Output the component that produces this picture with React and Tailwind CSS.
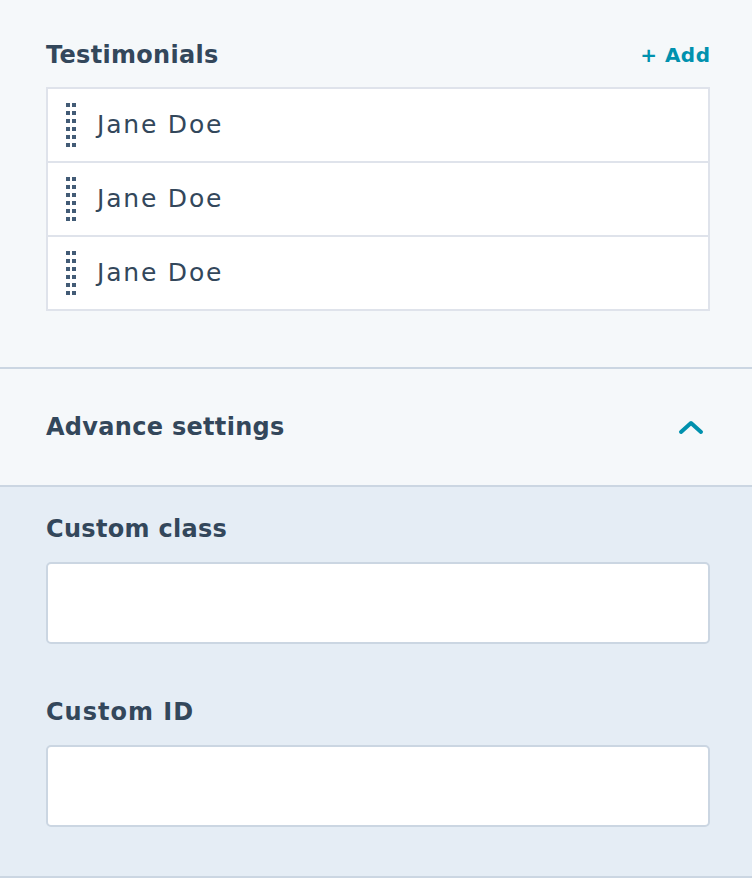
import React from "react";

const font = { fontFamily: '"DejaVu Sans", "Noto Sans", sans-serif' };

function Handle() {
  const dots = [];
  for (let r = 0; r < 6; r++) {
    for (let c = 0; c < 2; c++) {
      dots.push(<rect key={`${r}-${c}`} x={c * 6} y={r * 8} width="4" height="4" fill="#425b76" />);
    }
  }
  return (
    <svg width="10" height="44" viewBox="0 0 10 44" className="shrink-0">
      {dots}
    </svg>
  );
}

function Row({ last }) {
  return (
    <div className={`flex items-center pl-[18px] bg-white ${last ? "h-[72px]" : "h-[74px] border-b-2 border-[#dfe3eb]"}`}>
      <Handle />
      <span className="ml-[21px] text-[25px] tracking-[1.8px] text-[#33475b]">Jane Doe</span>
    </div>
  );
}

export default function App() {
  return (
    <div className="w-[752px] h-[878px] bg-[#e5edf5] text-[#33475b]" style={font}>
      <div className="bg-[#f5f8fa] pl-[46px] pr-[42px] pt-[38px] pb-[56px] border-b-2 border-[#cbd6e2]">
        <div className="flex h-[34px] items-center justify-between">
          <span className="text-[24px] font-bold tracking-[0.3px]">Testimonials</span>
          <span className="text-[20px] font-bold tracking-[0.5px] text-[#0091ae] -mr-[0.5px]">+ Add</span>
        </div>
        <div className="mt-[15px] border-2 border-[#dfe3eb]">
          <Row />
          <Row />
          <Row last />
        </div>
      </div>
      <div className="bg-[#f5f8fa] h-[118px] pl-[46px] pr-[48px] flex items-center justify-between border-b-2 border-[#cbd6e2]">
        <span className="text-[24px] font-bold tracking-[0.3px]">Advance settings</span>
        <svg width="26" height="16" viewBox="0 0 26 16">
          <path d="M3 13 L13 4 L23 13" fill="none" stroke="#0091ae" strokeWidth="4" strokeLinecap="round" strokeLinejoin="round" />
        </svg>
      </div>
      <div className="pl-[46px] pr-[42px] pt-[27px] h-[391px] border-b-2 border-[#cbd6e2]">
        <div className="h-[30px] flex items-center text-[24px] font-bold tracking-[0.3px]">Custom class</div>
        <div className="mt-[18px] h-[82px] rounded-[5px] border-2 border-[#cbd6e2] bg-white" />
        <div className="mt-[53px] h-[30px] flex items-center text-[24px] font-bold tracking-[1px]">Custom ID</div>
        <div className="mt-[18px] h-[82px] rounded-[5px] border-2 border-[#cbd6e2] bg-white" />
      </div>
    </div>
  );
}
